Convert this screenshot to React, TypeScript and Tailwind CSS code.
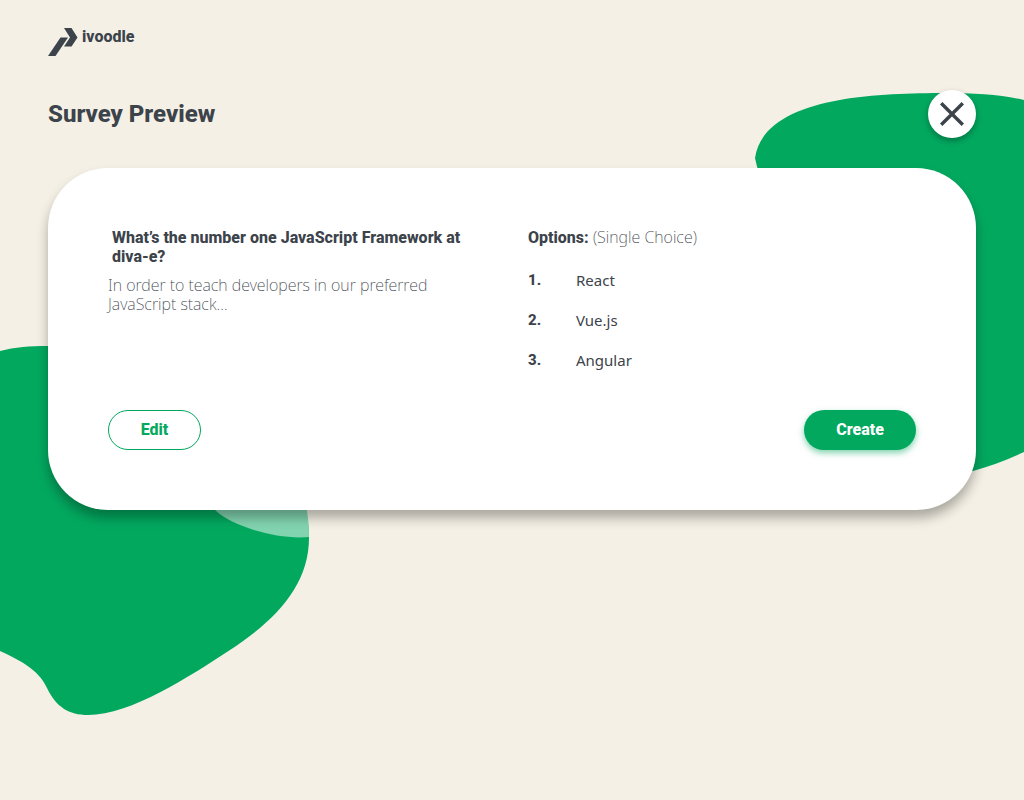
const options = ['React', 'Vue.js', 'Angular'];

function Backdrop() {
  return (
    <div aria-hidden="true" className="pointer-events-none absolute inset-0 overflow-hidden">
      <svg className="absolute top-[340px] left-0" width="320" height="380" viewBox="0 340 320 380">
        <path
          fill="#03a85f"
          d="M0 351C15 347 30 346 48 346C140 350 290 420 306 510C308 520 309 530 309 538C309 585 276 620 230 650C190 676 131 715 88 715C69 715 56 707 47 688C41 674 27 663 0 651Z"
        />
        <path fill="#82d4b0" d="M200 497L304 497C308 512 309 525 309 537C276 540 232 526 215 510Z" />
      </svg>
      <svg className="absolute top-[80px] right-0" width="284" height="400" viewBox="740 80 284 400">
        <path
          fill="#03a85f"
          d="M1024 100C1004 95 975 93 945 93C870 93 764 98 755 158C770 230 850 330 900 470L973 471C991 466 1007 460 1024 452Z"
        />
      </svg>
    </div>
  );
}

function Logo() {
  return (
    <a href="#" className="flex w-fit items-start gap-1 font-[Roboto,sans-serif] text-base leading-[18px] font-extrabold">
      <svg width="30" height="28" viewBox="0 0 30 28" fill="currentColor" aria-hidden="true">
        <path d="M0 28L12.5 9.5H20L7.5 28Z" />
        <path d="M16 0H23.5L29.5 9.5L23.5 18.5H16L22 9.5Z" />
      </svg>
      ivoodle
    </a>
  );
}

export default function App() {
  return (
    <div className="relative min-h-screen bg-[#f4f0e5] font-['Noto_Sans',sans-serif] text-[#3c434a]">
      <Backdrop />
      <div className="relative px-12 pt-7 pb-12">
        <header>
          <Logo />
        </header>
        <main>
          <div className="mt-[34px] flex items-center justify-between">
            <h1 className="font-[Roboto,sans-serif] text-2xl leading-8 font-extrabold">Survey Preview</h1>
            <button
              type="button"
              aria-label="Close preview"
              className="flex size-12 items-center justify-center rounded-full bg-white shadow-[0_3px_6px_rgba(0,0,0,0.3)]"
            >
              <svg width="24" height="24" viewBox="0 0 24 24" fill="none" stroke="currentColor" strokeWidth="3.4" aria-hidden="true">
                <path d="M1.2 1.2L22.8 22.8M22.8 1.2L1.2 22.8" />
              </svg>
            </button>
          </div>
          <section className="mt-[30px] rounded-[60px] bg-white p-[60px] shadow-[0_8px_12px_rgba(0,0,0,0.3)]">
            <div className="grid grid-cols-2 gap-x-8">
              <div>
                <h2 className="pl-1 font-[Roboto,sans-serif] text-base leading-[19px] font-extrabold">
                  What’s the number one JavaScript Framework at diva-e?
                </h2>
                <p className="mt-[10px] pr-8 text-base leading-[19px] font-extralight">
                  In order to teach developers in our preferred JavaScript stack…
                </p>
              </div>
              <div>
                <p className="text-base leading-[19px]">
                  <strong className="font-[Roboto,sans-serif] font-extrabold">Options:</strong>{' '}
                  <span className="font-extralight">(Single Choice)</span>
                </p>
                <ol className="mt-[13px] text-[15px] leading-10">
                  {options.map((option, index) => (
                    <li key={option} className="flex">
                      <span className="w-12 font-[Roboto,sans-serif] font-extrabold">{index + 1}.</span>
                      {option}
                    </li>
                  ))}
                </ol>
              </div>
            </div>
            <div className="mt-[30px] flex justify-between font-[Roboto,sans-serif] text-base leading-5 font-extrabold">
              <button type="button" className="h-10 w-[93px] rounded-full border border-[#03a85f] text-[#03a85f]">
                Edit
              </button>
              <button
                type="button"
                className="h-10 w-28 rounded-full bg-[#03a85f] text-white shadow-[0_3px_6px_rgba(3,168,95,0.5)]"
              >
                Create
              </button>
            </div>
          </section>
        </main>
      </div>
    </div>
  );
}
